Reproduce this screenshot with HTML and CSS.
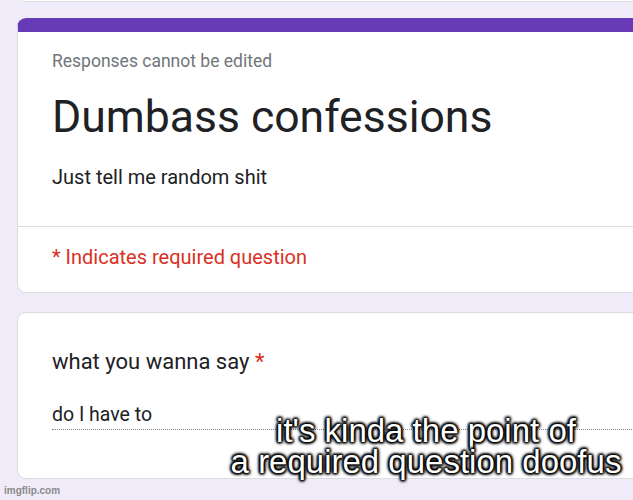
FILE: index.html
```html
<!DOCTYPE html>
<html>
<head>
<meta charset="utf-8">
<link rel="stylesheet" href="styles.css">
</head>
<body>
<div class="page">
  <div class="prev-card"></div>
  <div class="card head-card">
    <div class="head-main">
      <div class="note">Responses cannot be edited</div>
      <div class="title">Dumbass confessions</div>
      <div class="desc">Just tell me random shit</div>
    </div>
    <div class="head-req">* Indicates required question</div>
  </div>
  <div class="card q-card">
    <div class="q-title">what you wanna say <span class="star">*</span></div>
    <div class="answer">do I have to</div>
  </div>
  <div class="watermark">imgflip.com</div>
</div>
<div class="caption">it's kinda the point of<br>a required question doofus</div>
</body>
</html>
```
FILE: styles.css
```css
html, body {
  margin: 0;
  padding: 0;
}
body {
  width: 633px;
  height: 500px;
  overflow: hidden;
  background: #f0ebf8;
  position: relative;
  font-family: Roboto, "Liberation Sans", Arial, sans-serif;
  color: #202124;
}
.page {
  padding-left: 17px;
}
.prev-card {
  margin-left: 5px;
  width: 700px;
  height: 1px;
  background: #fff;
  border-bottom: 1px solid #dadce0;
  border-bottom-left-radius: 6px;
}
.card {
  width: 700px;
  background: #fff;
  border: 1px solid #dadce0;
  border-radius: 9px;
  box-sizing: border-box;
}
.head-card {
  margin-top: 16px;
  border-top: 14px solid #673ab7;
  height: 275px;
}
.head-main {
  padding: 19px 0 37px 34px;
  border-bottom: 1px solid #dadce0;
}
.note {
  font-size: 17.5px;
  line-height: 20px;
  color: #70757a;
}
.title {
  margin-top: 22px;
  font-size: 44.5px;
  line-height: 48px;
}
.desc {
  margin-top: 24px;
  font-size: 20px;
  line-height: 24px;
}
.head-req {
  padding: 18px 0 0 34px;
  font-size: 20px;
  line-height: 24px;
  color: #d93025;
}
.q-card {
  margin-top: 19px;
  height: 167px;
  padding: 36px 0 0 34px;
}
.q-title {
  font-size: 22px;
  line-height: 26px;
}
.star {
  color: #d93025;
}
.answer {
  margin-top: 29px;
  font-size: 19.5px;
  line-height: 22px;
  padding-bottom: 3px;
  border-bottom: 1px dotted #80868b;
}
.watermark {
  margin-top: 5px;
  margin-left: -13px;
  font-family: "Liberation Sans", Arial, sans-serif;
  font-weight: bold;
  font-size: 10px;
  line-height: 14px;
  color: #8a8a8a;
}
.caption {
  position: absolute;
  left: 220px;
  width: 412px;
  top: 415px;
  text-align: center;
  font-family: "Liberation Sans", Arial, sans-serif;
  font-size: 33px;
  line-height: 31px;
  color: #fff;
  text-shadow: 0 0 2px #000, 0 0 2px #000, 0 0 3px #000, 0 0 4px #000, 1px 1px 3px #000, -1px -1px 3px #000, 1px -1px 3px #000, -1px 1px 3px #000;
}
```
